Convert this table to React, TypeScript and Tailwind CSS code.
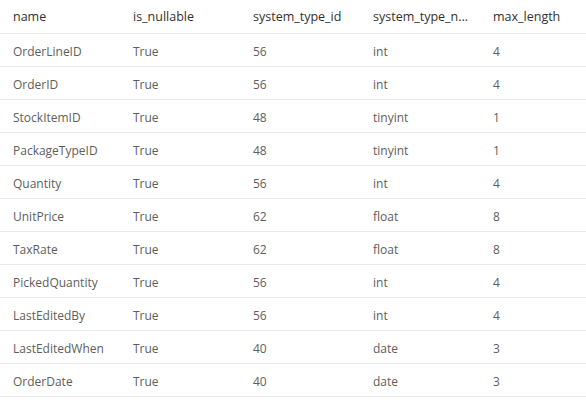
const columns = ['name', 'is_nullable', 'system_type_id', 'system_type_n...', 'max_length'];

const rows = [
  ['OrderLineID', 'True', '56', 'int', '4'],
  ['OrderID', 'True', '56', 'int', '4'],
  ['StockItemID', 'True', '48', 'tinyint', '1'],
  ['PackageTypeID', 'True', '48', 'tinyint', '1'],
  ['Quantity', 'True', '56', 'int', '4'],
  ['UnitPrice', 'True', '62', 'float', '8'],
  ['TaxRate', 'True', '62', 'float', '8'],
  ['PickedQuantity', 'True', '56', 'int', '4'],
  ['LastEditedBy', 'True', '56', 'int', '4'],
  ['LastEditedWhen', 'True', '40', 'date', '3'],
  ['OrderDate', 'True', '40', 'date', '3'],
];

export default function App() {
  return (
    <div className="h-[414px] w-[586px] bg-white font-['Open_Sans',sans-serif]">
      <div className="grid h-[34px] grid-cols-[120px_120px_120px_120px_1fr] items-center border-b border-[#edebe9] pt-[1px] text-[12.5px] text-[#323130]">
        {columns.map(col => (
          <div key={col} className="pl-[13px]">
            {col}
          </div>
        ))}
      </div>
      {rows.map(row => (
        <div
          key={row[0]}
          className="grid h-[33px] grid-cols-[120px_120px_120px_120px_1fr] items-center border-b border-[#edebe9] pt-[3px] text-[12px] text-[#605e5c]"
        >
          {row.map((cell, i) => (
            <div key={i} className="pl-[13px]">
              {cell}
            </div>
          ))}
        </div>
      ))}
    </div>
  );
}
